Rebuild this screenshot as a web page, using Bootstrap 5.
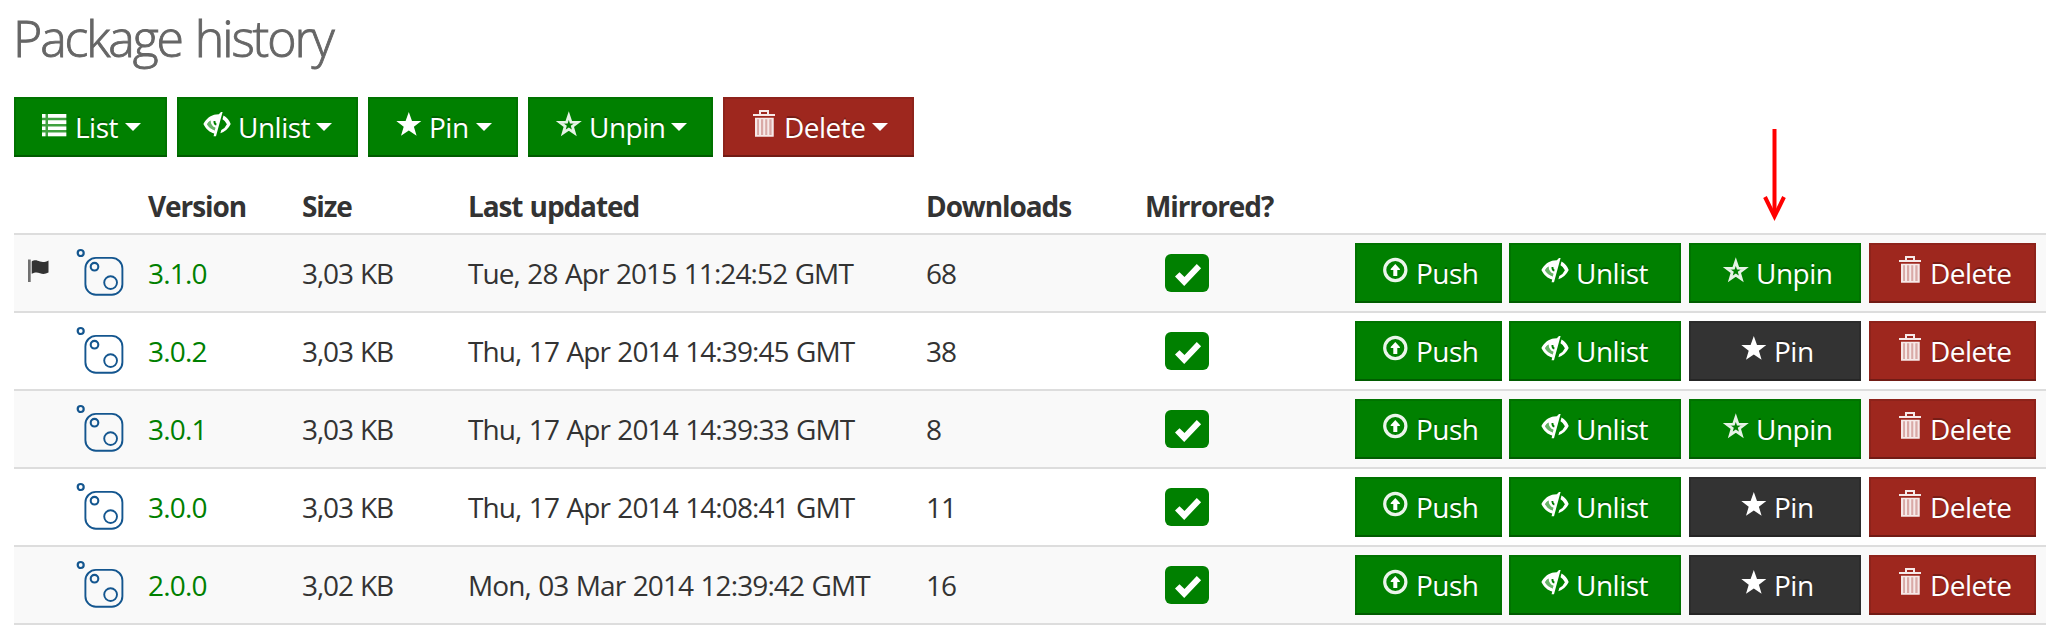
<!DOCTYPE html>
<html lang="en">
<head>
<meta charset="utf-8">
<title>Package history</title>
<link href="https://cdn.jsdelivr.net/npm/bootstrap@5.3.0/dist/css/bootstrap.min.css" rel="stylesheet">
<style>
body{font-family:"Open Sans","Noto Sans",sans-serif;font-size:28px;color:#333;background:#fff;overflow:hidden}
.page{width:2032px;margin-left:14px;position:relative}
h1{font-size:50px;font-weight:300;line-height:77px;color:#666;margin:0 0 20px -1px;letter-spacing:-2.1px;word-spacing:2px;-webkit-text-stroke:.9px #666}
.btn-feed{--bs-btn-color:#fff;--bs-btn-hover-color:#fff;height:60px;line-height:60px;font-size:28px;border:0;border-radius:0;padding:0 24px 0 26px;display:flex;text-align:left;background:#008000;box-shadow:inset 0 -2px 0 #005c00,inset 0 0 0 2px #007300;text-shadow:0 -2px 0 rgba(0,0,0,.25);letter-spacing:-.5px;white-space:nowrap}
.btn-feed svg{width:30px;height:30px;margin:12px 5px 0 0;flex:none;fill:#fff}
.btn-red{background:#9e271e;box-shadow:inset 0 -2px 0 #711b15,inset 0 0 0 2px #8e231b}
.btn-dark-pin{background:#333;box-shadow:inset 0 -2px 0 #252525,inset 0 0 0 2px #2c2c2c;padding-left:50px}
.drop{padding-right:26px}
.drop::after{content:"";margin:26px 0 0 auto;border:8px solid transparent;border-top-color:#fff;border-bottom:0;height:0}
.w-list{width:153px}.w-unlist{width:181px}.w-pin{width:150px}.w-unpin{width:185px}.w-del{width:191px}
.actions{display:grid;grid-template-columns:146px 172px 172px 167px;column-gap:8px}
.actions>:first-child{width:147px}
.actions .pad{padding-left:32px}
.history{table-layout:fixed;border-collapse:separate;border-spacing:0;margin:0;color:#333;width:2032px;letter-spacing:-.9px;word-spacing:1px}
.history th,.history td{border:0;border-top:2px solid #ddd;padding:0 8px 0 7px;height:78px;line-height:38px;vertical-align:middle;background:#fff;box-shadow:none;color:#333;white-space:nowrap}
.history thead th{border-top:0;height:76px;padding-top:30px;vertical-align:top;letter-spacing:-1.1px}
.history tbody tr:nth-child(odd) td{background:#f9f9f9}
.history tbody tr:last-child td{border-bottom:2px solid #ddd;height:80px}
.history a{color:#008000;text-decoration:none}
.history td:nth-child(3),.history th:nth-child(3){padding-left:8px}
.history td:nth-child(3){letter-spacing:-.8px}
.history td:nth-child(4){letter-spacing:-1.1px}
.history td svg{display:block}
.history td:nth-child(1),.history td:nth-child(7),.history td:nth-child(8){padding-left:8px}
.mirrored-ok{width:44px;height:38px;border-radius:6px;background:#008000;margin-left:19px}
.pointer{position:absolute;left:1744px;top:127px;width:32px;height:96px}
</style>
</head>
<body>
<svg class="d-none">
<symbol id="list" viewBox="0 0 30 30"><path d="M2 5h3.5v3.7H2zM8 5h18.3v3.7H8zM2 11.2h3.5v3.7H2zM8 11.2h18.3v3.7H8zM2 17.4h3.5v3.7H2zM8 17.4h18.3v3.7H8zM2 23.6h3.5v3.7H2zM8 23.6h18.3v3.7H8z"/><path fill-opacity=".25" d="M2 5h24.300v22.300H2z"/></symbol>
<symbol id="unlist" viewBox="0 0 30 30"><path fill-rule="evenodd" d="M15.800 5.300 18 3h1.600l-6.600 24.200h-2.400l.6-2.700C7 23.400 2.800 20.200.4 15 3.300 9.600 8 6 13 5.600zM7.500 11.500Q4.900 13 4 15.300 6.400 19.800 11.700 21.400l.7-2.600Q7.700 17 7.500 11.500zM10.500 12q-.3 3.500 2.600 4.600l.5-1.900q-1.500-.8-1.200-2.700z"/><path fill-opacity=".4" d="M7.500 11.500Q4.900 13 4 15.300 6.400 19.800 11.700 21.400l.7-2.600Q7.700 17 7.500 11.500z"/><path d="M20.500 6.500Q25.500 9 27.700 15 24.500 21.800 17.400 24.200l.9-3.300Q22.300 19 23.900 15.200 22.900 12.300 19.500 10.300z"/></symbol>
<symbol id="star" viewBox="0 0 30 30"><path d="M14.800 3 18 12l9.300.1-7.400 5.700 2.700 8.900-7.800-5.200L7 26.700l2.700-8.900L2.300 12.100l9.300-.1z"/></symbol>
<symbol id="star-o" viewBox="0 0 30 30"><path fill="none" stroke="#fff" stroke-opacity=".9" stroke-width="2.800" d="m14.800 6.600 2.200 6.500 6.800.2-5.400 4.100 1.900 6.400-5.500-3.700-5.500 3.700 1.900-6.400-5.400-4.100 6.800-.2z"/></symbol>
<symbol id="trash" viewBox="0 0 30 30"><path fill="#d9a9a6" d="M6.500 9h17.700v18H6.500z"/><path fill="#f6e9e8" d="M10 5V1h10v4h6v2H4V5zm2-2v2h6V3zM6 8.700h18.700v1.600H6zM6 26h18.700v1.700H6zM6 9h2.100v18H6zM10 9h2v18h-2zM14.200 9h2v18h-2zM18.300 9h2v18h-2zM22.600 9h2.100v18h-2.100z"/></symbol>
<symbol id="push" viewBox="0 0 30 30"><circle cx="14.300" cy="15" r="10.600" fill="none" stroke="#fff" stroke-opacity=".92" stroke-width="3.200"/><path d="m14.300 9 4.600 5v1h-2.600v6h-4v-6H9.700v-1z"/></symbol>
<symbol id="tick" viewBox="0 0 44 38"><path fill="#fff" d="m10 22.500 4.500-4.300 5 4.800L31.800 10l4.300 4.200L19.200 32z"/></symbol>
<symbol id="pkg" viewBox="0 0 48 50"><g fill="none" stroke="#14568f" stroke-width="1.900"><circle cx="4.700" cy="5" r="3" stroke-width="2.200"/><rect x="9.400" y="9.900" width="37" height="36.800" rx="10.500"/><circle cx="18.500" cy="18.700" r="3.800" stroke-width="2.100"/><circle cx="34.600" cy="34.600" r="6.400"/></g></symbol>
</svg>
<main class="page">
<h1>Package history</h1>
<div class="d-flex toolbar" style="gap:10px">
<button class="btn btn-feed drop w-list"><svg><use href="#list"/></svg>List</button>
<button class="btn btn-feed drop w-unlist"><svg><use href="#unlist"/></svg>Unlist</button>
<button class="btn btn-feed drop w-pin"><svg><use href="#star"/></svg>Pin</button>
<button class="btn btn-feed drop w-unpin"><svg><use href="#star-o"/></svg>Unpin</button>
<button class="btn btn-feed btn-red drop w-del"><svg><use href="#trash"/></svg>Delete</button>
</div>
<table class="table history">
<colgroup><col style="width:55px"><col style="width:71px"><col style="width:155px"><col style="width:166px"><col style="width:458px"><col style="width:219px"><col style="width:209px"><col></colgroup>
<thead><tr><th></th><th></th><th>Version</th><th>Size</th><th>Last updated</th><th>Downloads</th><th>Mirrored?</th><th></th></tr></thead>
<tbody>
<tr><td><svg width="30" height="34" fill="#333"><path fill="#707070" d="M6 3.500h2.700V26H6z"/><path d="M9.700 5.500C13 3.500 15 4.500 18 5.600c3 1 5.500.4 8.500-1.100v12c-3 1.500-5.500 1.900-8.500.7-3-1.100-5-1-8.300.600z"/></svg></td><td><svg width="48" height="50"><use href="#pkg"/></svg></td><td><a href="#">3.1.0</a></td><td>3,03 KB</td><td>Tue, 28 Apr 2015 11:24:52 GMT</td><td>68</td><td><div class="mirrored-ok"><svg width="44" height="38"><use href="#tick"/></svg></div></td><td><div class="actions"><button class="btn btn-feed"><svg><use href="#push"/></svg>Push</button><button class="btn btn-feed pad"><svg><use href="#unlist"/></svg>Unlist</button><button class="btn btn-feed pad"><svg><use href="#star-o"/></svg>Unpin</button><button class="btn btn-feed btn-red"><svg><use href="#trash"/></svg>Delete</button></div></td></tr>
<tr><td></td><td><svg width="48" height="50"><use href="#pkg"/></svg></td><td><a href="#">3.0.2</a></td><td>3,03 KB</td><td>Thu, 17 Apr 2014 14:39:45 GMT</td><td>38</td><td><div class="mirrored-ok"><svg width="44" height="38"><use href="#tick"/></svg></div></td><td><div class="actions"><button class="btn btn-feed"><svg><use href="#push"/></svg>Push</button><button class="btn btn-feed pad"><svg><use href="#unlist"/></svg>Unlist</button><button class="btn btn-feed btn-dark-pin"><svg><use href="#star"/></svg>Pin</button><button class="btn btn-feed btn-red"><svg><use href="#trash"/></svg>Delete</button></div></td></tr>
<tr><td></td><td><svg width="48" height="50"><use href="#pkg"/></svg></td><td><a href="#">3.0.1</a></td><td>3,03 KB</td><td>Thu, 17 Apr 2014 14:39:33 GMT</td><td>8</td><td><div class="mirrored-ok"><svg width="44" height="38"><use href="#tick"/></svg></div></td><td><div class="actions"><button class="btn btn-feed"><svg><use href="#push"/></svg>Push</button><button class="btn btn-feed pad"><svg><use href="#unlist"/></svg>Unlist</button><button class="btn btn-feed pad"><svg><use href="#star-o"/></svg>Unpin</button><button class="btn btn-feed btn-red"><svg><use href="#trash"/></svg>Delete</button></div></td></tr>
<tr><td></td><td><svg width="48" height="50"><use href="#pkg"/></svg></td><td><a href="#">3.0.0</a></td><td>3,03 KB</td><td>Thu, 17 Apr 2014 14:08:41 GMT</td><td>11</td><td><div class="mirrored-ok"><svg width="44" height="38"><use href="#tick"/></svg></div></td><td><div class="actions"><button class="btn btn-feed"><svg><use href="#push"/></svg>Push</button><button class="btn btn-feed pad"><svg><use href="#unlist"/></svg>Unlist</button><button class="btn btn-feed btn-dark-pin"><svg><use href="#star"/></svg>Pin</button><button class="btn btn-feed btn-red"><svg><use href="#trash"/></svg>Delete</button></div></td></tr>
<tr><td></td><td><svg width="48" height="50"><use href="#pkg"/></svg></td><td><a href="#">2.0.0</a></td><td>3,02 KB</td><td>Mon, 03 Mar 2014 12:39:42 GMT</td><td>16</td><td><div class="mirrored-ok"><svg width="44" height="38"><use href="#tick"/></svg></div></td><td><div class="actions"><button class="btn btn-feed"><svg><use href="#push"/></svg>Push</button><button class="btn btn-feed pad"><svg><use href="#unlist"/></svg>Unlist</button><button class="btn btn-feed btn-dark-pin"><svg><use href="#star"/></svg>Pin</button><button class="btn btn-feed btn-red"><svg><use href="#trash"/></svg>Delete</button></div></td></tr>
</tbody>
</table>
<svg class="pointer" viewBox="0 0 32 96" fill="none" stroke="#f00"><path stroke-width="4" d="M16.500 2v86"/><path stroke-width="4" d="m7 70 9.500 19.500L26 70"/></svg>
</main>
<script src="https://cdn.jsdelivr.net/npm/bootstrap@5.3.0/dist/js/bootstrap.bundle.min.js"></script>
</body>
</html>
